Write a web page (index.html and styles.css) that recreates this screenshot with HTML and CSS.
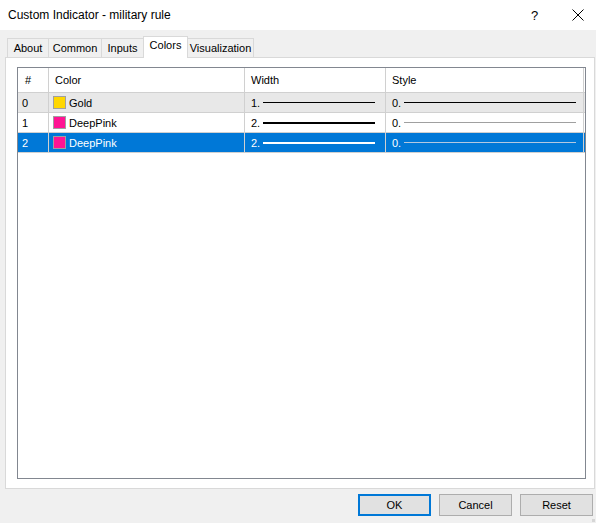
FILE: index.html
```html
<!DOCTYPE html>
<html>
<head>
<meta charset="utf-8">
<link rel="stylesheet" href="styles.css">
</head>
<body>
<div class="window">
  <div class="titlebar">
    <span class="title">Custom Indicator - military rule</span>
    <span class="help">?</span>
    <span class="close"><svg width="12" height="12" viewBox="0 0 12 12"><path d="M0.5 0.5 L11.5 11.5 M11.5 0.5 L0.5 11.5" stroke="#000" stroke-width="1"/></svg></span>
  </div>
  <div class="body">
    <div class="tabs">
      <div class="tab t-about">About</div>
      <div class="tab t-common">Common</div>
      <div class="tab t-inputs">Inputs</div>
      <div class="tab t-colors active">Colors</div>
      <div class="tab t-vis">Visualization</div>
    </div>
    <div class="panel">
      <div class="grid">
        <div class="row head">
          <div class="c c-num">#</div>
          <div class="c c-color">Color</div>
          <div class="c c-width">Width</div>
          <div class="c c-style">Style</div>
          <div class="c c-end"></div>
        </div>
        <div class="row r0">
          <div class="c c-num">0</div>
          <div class="c c-color"><span class="sw gold"></span>Gold</div>
          <div class="c c-width">1.<span class="ln w1"></span></div>
          <div class="c c-style">0.<span class="ln s-solid"></span></div>
          <div class="c c-end"></div>
        </div>
        <div class="row r1">
          <div class="c c-num">1</div>
          <div class="c c-color"><span class="sw pink"></span>DeepPink</div>
          <div class="c c-width">2.<span class="ln w2"></span></div>
          <div class="c c-style">0.<span class="ln s-thin"></span></div>
          <div class="c c-end"></div>
        </div>
        <div class="row r2 sel">
          <div class="c c-num">2</div>
          <div class="c c-color"><span class="sw pink"></span>DeepPink</div>
          <div class="c c-width">2.<span class="ln w2"></span></div>
          <div class="c c-style">0.<span class="ln s-thin"></span></div>
          <div class="c c-end"></div>
        </div>
      </div>
    </div>
    <div class="buttons">
      <button class="btn default">OK</button>
      <button class="btn">Cancel</button>
      <button class="btn">Reset</button>
    </div>
  </div>
  <div class="grip"></div>
</div>
</body>
</html>
```
FILE: styles.css
```css
html, body {
  margin: 0;
  padding: 0;
}
body {
  width: 596px;
  height: 523px;
  overflow: hidden;
  font-family: "Liberation Sans", Arial, sans-serif;
  font-size: 11px;
  color: #000;
  background: #f0f0f0;
}
.window {
  position: relative;
  width: 596px;
  height: 523px;
}
.titlebar {
  height: 30px;
  background: #fff;
  display: flex;
  align-items: center;
  padding-left: 8px;
}
.title {
  font-size: 12px;
  flex: 1;
}
.help {
  width: 6px;
  margin-right: 35px;
  font-size: 13px;
}
.close {
  width: 12px;
  margin-right: 12px;
  display: flex;
}
.body {
  padding: 7px 0 0 5px;
}
.tabs {
  display: flex;
  padding-left: 2px;
  height: 20px;
  align-items: flex-end;
}
.tab {
  height: 19px;
  box-sizing: border-box;
  border: 1px solid #d9d9d9;
  border-bottom: none;
  margin-right: -1px;
  line-height: 19px;
  text-align: center;
  background: #f0f0f0;
}
.t-about { width: 42px; }
.t-common { width: 54px; }
.t-inputs { width: 43px; }
.t-colors { width: 45px; }
.t-vis { width: 67px; }
.tab.active {
  height: 22px;
  background: #fff;
  position: relative;
  z-index: 1;
  margin-bottom: -1px;
  line-height: 17px;
}
.panel {
  width: 590px;
  height: 432px;
  box-sizing: border-box;
  border: 1px solid #d9d9d9;
  background: #fff;
  padding: 9px 8px 10px 11px;
}
.grid {
  height: 412px;
  box-sizing: border-box;
  border: 1px solid #828790;
  background: #fff;
}
.row {
  display: flex;
  height: 20px;
  box-sizing: border-box;
  border-bottom: 1px solid #d0d0d0;
}
.row.head {
  height: 25px;
  align-items: center;
}
.c {
  box-sizing: border-box;
  border-right: 1px solid #d0d0d0;
  height: 100%;
  display: flex;
  align-items: center;
  white-space: nowrap;
}
.c-num { width: 31px; padding-left: 6px; }
.c-color { width: 196px; padding-left: 6px; }
.c-width { width: 141px; padding-left: 6px; }
.c-style { width: 198px; padding-left: 6px; }
.c-end { flex: 1; border-right: none; }
.row .c-num { padding-left: 4px; }
.row.head .c-num { padding-left: 7px; }
.r0 { background: #e8e8e8; }
.sel { background: #0078d7; color: #fff; }
.sw {
  width: 11px;
  height: 11px;
  border: 1px solid #a0a0a0;
  margin-right: 3px;
  margin-left: -2px;
}
.sw.gold { background: #ffd700; }
.sw.pink { background: #ff1493; }
.ln {
  display: block;
  margin-left: 3px;
}
.c-width .ln { width: 112px; }
.c-style .ln { width: 172px; }
.w1 { height: 1px; background: #000; }
.w2 { height: 2px; background: #000; }
.s-solid { height: 1px; background: #000; }
.s-thin { height: 1px; background: #a0a0a0; }
.sel .w2 { background: #fff; }
.sel .s-thin { background: #b4c8e0; }
.buttons {
  display: flex;
  justify-content: flex-end;
  gap: 8px;
  padding-top: 5px;
  padding-right: 3px;
}
.btn {
  width: 73px;
  height: 22px;
  box-sizing: border-box;
  border: 1px solid #adadad;
  background: #e1e1e1;
  font-family: inherit;
  font-size: 11px;
  color: #000;
  padding: 0;
}
.btn.default {
  border: 2px solid #0078d7;
}
.grip {
  position: absolute;
  right: 1px;
  bottom: 1px;
  width: 3px;
  height: 3px;
  background: radial-gradient(circle, #b8b8b8 0.6px, transparent 0.8px) 0 0 / 2px 2px;
}
```
